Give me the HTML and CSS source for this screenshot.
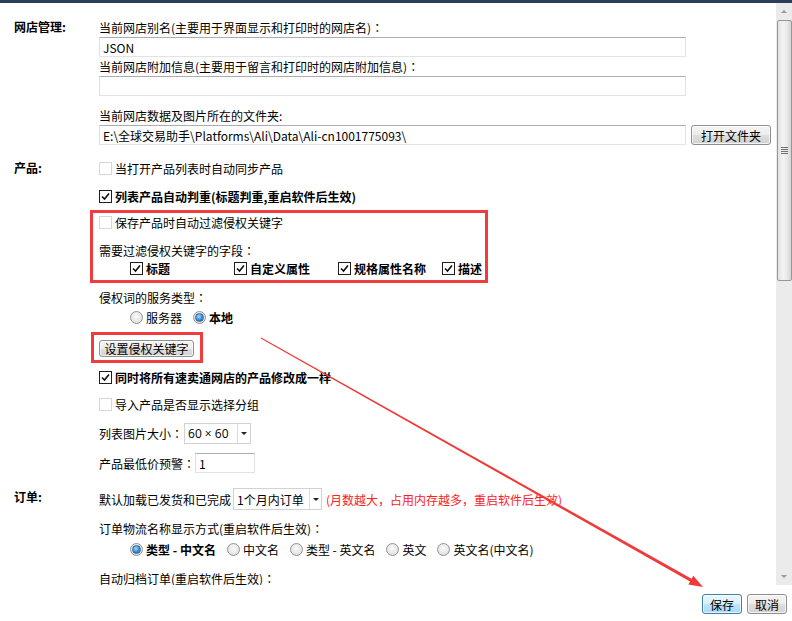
FILE: index.html
```html
<!DOCTYPE html>
<html>
	<head>
		<meta charset="utf-8">
		<title>设置</title>
		<link rel="stylesheet" href="styles.css">
	</head>
	<body>
		<div class="topbar"></div>
		<div class="main">
			<div class="content">
				<!-- 网店管理 -->
				<div class="sec sec1">
					<div class="sec-title">网店管理:</div>
					<div class="sec-body">
						<div class="line">当前网店别名(主要用于界面显示和打印时的网店名)<span class="colon">：</span></div>
						<input class="txt txt-long m1" type="text" value="JSON">
						<div class="line">当前网店附加信息(主要用于留言和打印时的网店附加信息)<span class="colon">：</span></div>
						<input class="txt txt-long m1" type="text" value="">
						<div class="line m10">当前网店数据及图片所在的文件夹:</div>
						<div class="path-row">
							<input class="txt txt-long" type="text" value="E:\全球交易助手\Platforms\Ali\Data\Ali-cn1001775093\">
							<a href="javascript:void(0)" class="btn btn-open">打开文件夹</a>
						</div>
					</div>
				</div>
				<!-- 产品 -->
				<div class="sec sec2">
					<div class="sec-title">产品:</div>
					<div class="sec-body">
						<div class="line"><span class="cb"></span>当打开产品列表时自动同步产品</div>
						<div class="line m10 b"><span class="cb on"><svg viewBox="0 0 11 11"><path d="M2 5.5 L4.5 8 L9 2.5"/></svg></span>列表产品自动判重(标题判重,重启软件后生效)</div>
						<div class="redbox">
							<div class="line"><span class="cb"></span>保存产品时自动过滤侵权关键字</div>
							<div class="line m10">需要过滤侵权关键字的字段<span class="colon">：</span></div>
							<div class="line fields b">
								<div class="field"><span class="cb on"><svg viewBox="0 0 11 11"><path d="M2 5.5 L4.5 8 L9 2.5"/></svg></span>标题</div>
								<div class="field"><span class="cb on"><svg viewBox="0 0 11 11"><path d="M2 5.5 L4.5 8 L9 2.5"/></svg></span>自定义属性</div>
								<div class="field"><span class="cb on"><svg viewBox="0 0 11 11"><path d="M2 5.5 L4.5 8 L9 2.5"/></svg></span>规格属性名称</div>
								<div class="field"><span class="cb on"><svg viewBox="0 0 11 11"><path d="M2 5.5 L4.5 8 L9 2.5"/></svg></span>描述</div>
							</div>
						</div>
						<div class="line m5">侵权词的服务类型<span class="colon">：</span></div>
						<div class="line radios m2">
							<span class="rd"></span><span class="rd-txt">服务器</span>
							<span class="rd on"></span><span class="rd-txt b">本地</span>
						</div>
						<div class="redbox2">
							<a href="javascript:void(0)" class="btn btn-key">设置侵权关键字</a>
						</div>
						<div class="line m5 b"><span class="cb on"><svg viewBox="0 0 11 11"><path d="M2 5.5 L4.5 8 L9 2.5"/></svg></span>同时将所有速卖通网店的产品修改成一样</div>
						<div class="line m9"><span class="cb"></span>导入产品是否显示选择分组</div>
						<div class="line sel-row m10">列表图片大小<span class="colon">：</span><div class="sel sel-size"><span class="sel-val latin">60 × 60</span><span class="sel-btn"><i></i></span></div></div>
						<div class="line num-row m9">产品最低价预警<span class="colon">：</span><input class="txt txt-num" type="text" value="1"></div>
					</div>
				</div>
				<!-- 订单 -->
				<div class="sec sec3">
					<div class="sec-title">订单:</div>
					<div class="sec-body">
						<div class="line ord-row">默认加载已发货和已完成<div class="sel sel-month"><span class="sel-val">1个月内订单</span><span class="sel-btn"><i></i></span></div><span class="warn">(月数越大，占用内存越多，重启软件后生效)</span></div>
						<div class="line m9">订单物流名称显示方式(重启软件后生效)<span class="colon">：</span></div>
						<div class="line radios m3">
							<span class="rd on"></span><span class="rd-txt b">类型 - 中文名</span>
							<span class="rd"></span><span class="rd-txt">中文名</span>
							<span class="rd"></span><span class="rd-txt">类型 - 英文名</span>
							<span class="rd"></span><span class="rd-txt">英文</span>
							<span class="rd"></span><span class="rd-txt">英文名(中文名)</span>
						</div>
						<div class="line m11">自动归档订单(重启软件后生效)<span class="colon">：</span></div>
					</div>
				</div>
			</div>
			<div class="scrollbar">
				<div class="sb-up"><i></i></div>
				<div class="sb-thumb"><span></span><span></span><span></span><span></span></div>
				<div class="sb-track"></div>
				<div class="sb-down"><i></i></div>
			</div>
		</div>
		<div class="footer">
			<a href="javascript:void(0)" class="btn btn-save">保存</a>
			<a href="javascript:void(0)" class="btn btn-cancel">取消</a>
		</div>
		<!-- 标注箭头 -->
		<svg class="arrow" width="792" height="621" viewBox="0 0 792 621">
			<polygon points="261.25,337.56 691.54,578.79 693.25,575.74 703,587 688.35,584.46 690.07,581.41 260.75,338.44"/>
		</svg>
	</body>
</html>
```

FILE: styles.css
```css
*{margin:0;padding:0;box-sizing:border-box;}
a{text-decoration:none;color:#000;}
body{width:792px;height:621px;overflow:hidden;position:relative;background:#fff;color:#000;font-family:"Noto Sans CJK SC","Microsoft YaHei",sans-serif;font-size:12px;}
.b{font-weight:bold;}
.colon{font-family:"Noto Sans CJK TC",sans-serif;}
.latin{font-family:"Open Sans","Noto Sans CJK SC",sans-serif;}
.m1{margin-top:1px;}
.m2{margin-top:2px;}
.m3{margin-top:3px;}
.m5{margin-top:5px;}
.m9{margin-top:9px;}
.m10{margin-top:10px;}
.m11{margin-top:11px;}

.topbar{height:3px;background:#2d3e5b;}
.main{display:flex;height:582px;}
.content{flex:1;overflow:hidden;}

/* sections */
.sec{display:flex;}
.sec1{margin-top:15px;}
.sec2{margin-top:14px;}
.sec3{margin-top:15px;}
.sec-title{width:99px;padding-left:14px;font-weight:bold;line-height:18px;}
.sec-body{flex:1;}
.line{height:18px;display:flex;align-items:center;white-space:nowrap;}

/* text boxes */
.txt{display:block;height:20px;border:1px solid #e2e3ea;border-top-color:#abadb3;border-left-color:#dbdfe6;padding:0 3px;font-family:inherit;font-size:12px;color:#000;outline:none;background:#fff;}
.txt-long{width:587px;}
.path-row{display:flex;margin-top:1px;}
.txt-num{width:60px;}
.num-row{height:20px;}

/* buttons */
.btn{display:flex;align-items:center;justify-content:center;border:1px solid #8e8f8f;border-radius:3px;background:linear-gradient(#f4f4f4 0%,#ececec 50%,#dedede 51%,#d3d3d3 100%);box-shadow:inset 0 0 0 1px rgba(255,255,255,.7);color:#000;}
.btn-open{width:80px;height:20px;margin-left:5px;}
.btn-key{width:95px;height:17px;}
.btn-save{width:40px;height:20px;border-color:#3c7fb1;background:linear-gradient(#eaf6fd 0%,#d9f0fc 50%,#bee6fd 51%,#a7d9f5 100%);}
.btn-cancel{width:40px;height:20px;}

/* checkboxes */
.cb{width:13px;height:13px;border:1px solid #d6d6d6;background:#fff;margin-right:3px;flex-shrink:0;display:flex;align-items:center;justify-content:center;}
.cb.on{border-color:#1e1e1e;}
.cb svg{width:11px;height:11px;}
.cb path{fill:none;stroke:#111;stroke-width:1.6;}

/* red boxes */
.redbox{margin:5px 0 0 -9px;width:398px;border:3px solid #f03c3c;padding:0 0 3px 6px;}
.fields{padding-left:31px;}
.field{width:104px;display:flex;align-items:center;}
.field:last-child{width:auto;}
.redbox2{margin:6px 0 0 -8px;width:112px;border:3px solid #f03c3c;padding:5px 6px 3px 5px;}

/* radios */
.radios{padding-left:31px;}
.rd{width:13px;height:13px;border-radius:50%;border:1px solid #949494;background:radial-gradient(circle at 50% 40%,#fbfbfb 0%,#e6e6e6 60%,#d2d2d2 100%);flex-shrink:0;display:flex;align-items:center;justify-content:center;}
.rd.on::after{content:"";width:7px;height:7px;border-radius:50%;background:radial-gradient(circle at 40% 35%,#9fd7f7 0%,#3a8fd0 55%,#1d5f9c 100%);border:1px solid #2a6aa6;}
.rd-txt{margin:0 11px 0 3px;}

/* selects */
.sel{display:flex;border:1px solid #d2d2d2;background:#fff;}
.sel-val{flex:1;display:flex;align-items:center;padding-left:3px;}
.sel-btn{border-left:1px solid #dcdcdc;display:flex;align-items:center;justify-content:center;}
.sel-btn i{width:0;height:0;border-left:3px solid transparent;border-right:3px solid transparent;border-top:3px solid #222;}
.sel-row{height:21px;}
.sel-size{width:67px;height:21px;margin-left:1px;}
.sel-size .sel-btn{width:13px;}
.ord-row{height:22px;}
.sel-month{width:89px;height:22px;margin-left:2px;}
.sel-month .sel-btn{width:12px;}
.warn{color:#ff2020;margin-left:4px;}

/* scrollbar */
.scrollbar{width:16px;background:#ebebeb;display:flex;flex-direction:column;align-items:center;}
.sb-up,.sb-down{height:17px;width:16px;display:flex;align-items:center;justify-content:center;}
.sb-up i{width:0;height:0;border-left:3px solid transparent;border-right:3px solid transparent;border-bottom:3px solid #9a9a9a;}
.sb-down i{width:0;height:0;border-left:3px solid transparent;border-right:3px solid transparent;border-top:3px solid #9a9a9a;}
.sb-thumb{width:15px;height:261px;border:1px solid #979797;border-radius:2px;background:linear-gradient(to right,#e2e2e2,#f3f3f3 40%,#e8e8e8 70%,#d4d4d4);display:flex;flex-direction:column;align-items:center;justify-content:center;gap:1px;}
.sb-thumb span{width:7px;height:1px;background:#707070;}
.sb-track{flex:1;}

/* footer */
.footer{height:36px;display:flex;justify-content:flex-end;gap:5px;padding:9px 5px 0 0;}

.arrow{position:absolute;left:0;top:0;pointer-events:none;}
.arrow polygon{fill:#f03a3a;}
```
